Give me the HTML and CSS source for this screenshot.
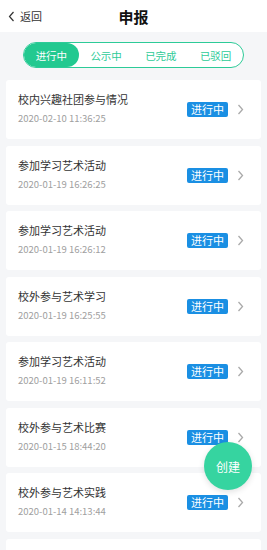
FILE: index.html
```html
<!DOCTYPE html>
<html lang="zh-CN">
<head>
    <meta charset="UTF-8">
    <meta name="viewport" content="width=device-width, initial-scale=1.0">
    <title>申报</title>
    <link rel="stylesheet" href="styles.css">
</head>
<body>
    <div class="header">
        <div class="back">
            <svg width="7" height="11" viewBox="0 0 7 11"><path d="M5.5 1 L1.5 5.5 L5.5 10" fill="none" stroke="#333" stroke-width="1.2"/></svg>
            <span>返回</span>
        </div>
        <div class="title">申报</div>
    </div>

    <div class="tabs-wrap">
        <div class="tabs">
            <div class="tab active">进行中</div>
            <div class="tab">公示中</div>
            <div class="tab">已完成</div>
            <div class="tab">已驳回</div>
        </div>
    </div>

    <div class="list">
        <div class="card">
            <div class="info">
                <div class="name">校内兴趣社团参与情况</div>
                <div class="date">2020-02-10 11:36:25</div>
            </div>
            <span class="badge">进行中</span>
            <svg class="arrow" width="7" height="11" viewBox="0 0 7 11"><path d="M1.5 1 L5.5 5.5 L1.5 10" fill="none" stroke="#aaa" stroke-width="1.3"/></svg>
        </div>
        <div class="card">
            <div class="info">
                <div class="name">参加学习艺术活动</div>
                <div class="date">2020-01-19 16:26:25</div>
            </div>
            <span class="badge">进行中</span>
            <svg class="arrow" width="7" height="11" viewBox="0 0 7 11"><path d="M1.5 1 L5.5 5.5 L1.5 10" fill="none" stroke="#aaa" stroke-width="1.3"/></svg>
        </div>
        <div class="card">
            <div class="info">
                <div class="name">参加学习艺术活动</div>
                <div class="date">2020-01-19 16:26:12</div>
            </div>
            <span class="badge">进行中</span>
            <svg class="arrow" width="7" height="11" viewBox="0 0 7 11"><path d="M1.5 1 L5.5 5.5 L1.5 10" fill="none" stroke="#aaa" stroke-width="1.3"/></svg>
        </div>
        <div class="card">
            <div class="info">
                <div class="name">校外参与艺术学习</div>
                <div class="date">2020-01-19 16:25:55</div>
            </div>
            <span class="badge">进行中</span>
            <svg class="arrow" width="7" height="11" viewBox="0 0 7 11"><path d="M1.5 1 L5.5 5.5 L1.5 10" fill="none" stroke="#aaa" stroke-width="1.3"/></svg>
        </div>
        <div class="card">
            <div class="info">
                <div class="name">参加学习艺术活动</div>
                <div class="date">2020-01-19 16:11:52</div>
            </div>
            <span class="badge">进行中</span>
            <svg class="arrow" width="7" height="11" viewBox="0 0 7 11"><path d="M1.5 1 L5.5 5.5 L1.5 10" fill="none" stroke="#aaa" stroke-width="1.3"/></svg>
        </div>
        <div class="card">
            <div class="info">
                <div class="name">校外参与艺术比赛</div>
                <div class="date">2020-01-15 18:44:20</div>
            </div>
            <span class="badge">进行中</span>
            <svg class="arrow" width="7" height="11" viewBox="0 0 7 11"><path d="M1.5 1 L5.5 5.5 L1.5 10" fill="none" stroke="#aaa" stroke-width="1.3"/></svg>
        </div>
        <div class="card">
            <div class="info">
                <div class="name">校外参与艺术实践</div>
                <div class="date">2020-01-14 14:13:44</div>
            </div>
            <span class="badge">进行中</span>
            <svg class="arrow" width="7" height="11" viewBox="0 0 7 11"><path d="M1.5 1 L5.5 5.5 L1.5 10" fill="none" stroke="#aaa" stroke-width="1.3"/></svg>
        </div>
        <div class="card last"></div>
    </div>

    <div class="fab">创建</div>
</body>
</html>
```

FILE: styles.css
```css
body {
    margin: 0;
    font-family: "Noto Sans CJK SC", "Noto Sans", sans-serif;
    background-color: #f5f6f8;
    color: #333;
    height: 550px;
    overflow: hidden;
}
.header {
    height: 32px;
    background: white;
    display: flex;
    align-items: center;
    justify-content: center;
    position: relative;
}
.back {
    position: absolute;
    left: 8px;
    top: 0;
    height: 32px;
    display: flex;
    align-items: center;
    gap: 5px;
    font-size: 11px;
    color: #333;
}
.title {
    font-size: 15px;
    font-weight: bold;
    color: #111;
}
.tabs-wrap {
    padding: 10px 0 12px 23px;
}
.tabs {
    width: 219px;
    height: 24px;
    display: flex;
    border: 1px solid #2dcb98;
    border-radius: 13px;
    background: white;
    overflow: hidden;
}
.tab {
    flex: 1;
    display: flex;
    align-items: center;
    justify-content: center;
    font-size: 10.5px;
    color: #2dcb98;
}
.tab.active {
    background: #22c990;
    color: white;
    border-radius: 13px;
}
.list {
    padding: 0 6px;
}
.card {
    height: 59px;
    margin-bottom: 6.5px;
    background: white;
    border-radius: 3px;
    display: flex;
    align-items: center;
    padding: 0 17px 0 12px;
}
.card.last {
    height: 20px;
}
.info {
    flex: 1;
    padding-bottom: 3px;
}
.name {
    font-size: 11px;
    line-height: 16px;
    color: #333;
}
.date {
    margin-top: 4px;
    font-size: 9.5px;
    line-height: 14px;
    color: #a0a0a0;
}
.badge {
    background: #1a8fe3;
    color: white;
    font-size: 11px;
    line-height: 15px;
    padding: 0 4px;
    border-radius: 2px;
}
.arrow {
    margin-left: 9px;
}
.fab {
    position: absolute;
    left: 204px;
    top: 442px;
    width: 48px;
    height: 48px;
    border-radius: 50%;
    background: #36d4a0;
    color: white;
    font-size: 12px;
    display: flex;
    align-items: center;
    justify-content: center;
    box-shadow: 0 2px 6px rgba(0,0,0,0.12);
}
```
